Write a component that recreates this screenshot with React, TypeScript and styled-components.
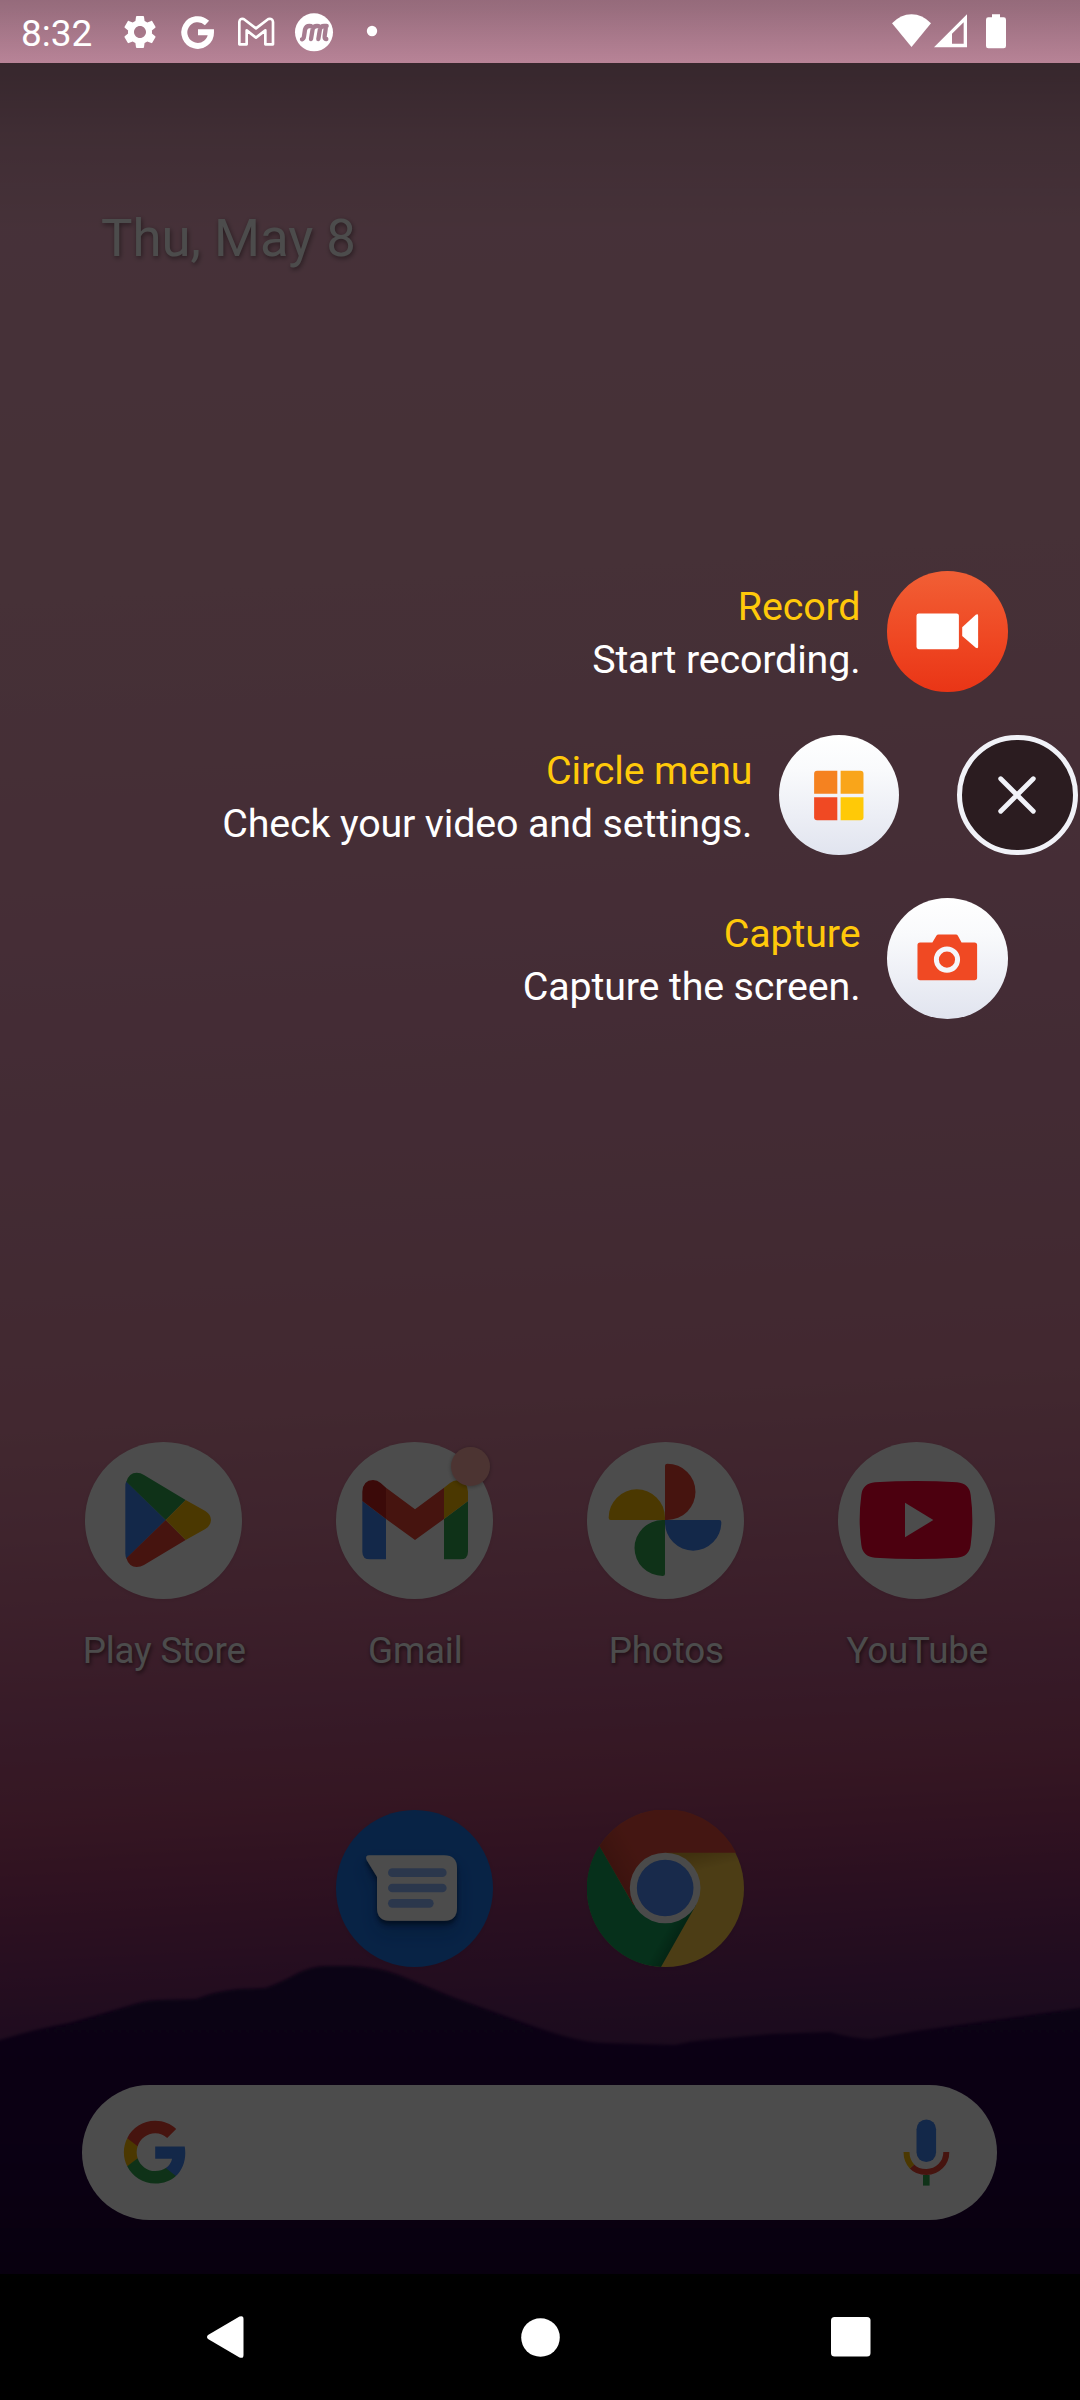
import React from "react";
import styled, { createGlobalStyle } from "styled-components";

const GlobalStyle = createGlobalStyle`
  *, *::before, *::after { box-sizing: border-box; }
  body { margin: 0; background: #000; font-family: Roboto, "Noto Sans", sans-serif; }
  svg { display: block; }
`;

const Screen = styled.div`
  position: relative;
  width: 1080px;
  height: 2400px;
  overflow: hidden;
  display: flex;
  flex-direction: column;
  background:
    linear-gradient(
      180deg,
      rgba(0, 0, 0, 0.37) 0px,
      rgba(0, 0, 0, 0.35) 10px,
      rgba(0, 0, 0, 0.22) 63px,
      rgba(0, 0, 0, 0.09) 135px,
      rgba(0, 0, 0, 0) 230px
    ),
    linear-gradient(
      176.5deg,
      rgb(236, 169, 195) 0px,
      rgb(234, 166, 190) 250px,
      rgb(233, 163, 183) 600px,
      rgb(230, 151, 181) 950px,
      rgb(221, 142, 170) 1250px,
      rgb(220, 134, 160) 1430px,
      rgb(211, 122, 152) 1530px,
      rgb(198, 103, 140) 1640px,
      rgb(183, 88, 132) 1730px,
      rgb(178, 76, 117) 1815px,
      rgb(158, 60, 110) 1890px,
      rgb(127, 47, 107) 1975px,
      rgb(100, 40, 103) 2050px,
      rgb(85, 35, 95) 2110px
    );
`;

const Hills = styled.svg`
  position: absolute;
  left: 0;
  top: 1950px;
`;

const StatusBar = styled.header`
  height: 63px;
  flex: none;
  display: flex;
  align-items: center;
  padding: 0 64px 0 21px;
  color: #fff;
`;

const Clock = styled.span`
  width: 99px;
  font-size: 37px;
  line-height: 44px;
  padding-top: 4px;
`;

const Notifications = styled.div`
  display: flex;
  gap: 18px;
  flex: 1;
`;

const SystemIcons = styled.div`
  display: flex;
`;

const BatterySlot = styled.div`
  margin-left: 5px;
`;

const Home = styled.main`
  position: relative;
  flex: 1;
  display: flex;
  flex-direction: column;
`;

const DateText = styled.div`
  height: 1379px;
  padding: 143px 0 0 101px;
  font-size: 52.7px;
  line-height: 64px;
  color: #fff;
  text-shadow: 1px 2px 5px rgba(0, 0, 0, 0.45);
`;

const AppGrid = styled.div<{ $height: number }>`
  display: grid;
  grid-template-columns: repeat(4, 251px);
  height: ${(p) => p.$height}px;
  padding: 0 38px;
`;

const AppTile = styled.div<{ $column?: number }>`
  display: flex;
  flex-direction: column;
  align-items: center;
  gap: 31px;
  ${(p) => (p.$column ? `grid-column: ${p.$column};` : "")}
`;

const AppIcon = styled.div<{ $color?: string }>`
  position: relative;
  width: 157px;
  height: 157px;
  border-radius: 50%;
  background: ${(p) => p.$color ?? "#fff"};
  box-shadow: 0 1px 4px rgba(0, 0, 0, 0.07);
`;

const AppLabel = styled.span`
  padding-left: 1.5px;
  font-size: 36.75px;
  letter-spacing: -0.14px;
  line-height: 42px;
  color: #fff;
  white-space: nowrap;
  text-shadow: 1px 2px 4px rgba(0, 0, 0, 0.6);
`;

const Badge = styled.i`
  position: absolute;
  left: 115px;
  top: 5px;
  width: 39px;
  height: 39px;
  border-radius: 50%;
  background: #ffb0a8;
  box-shadow: 0 1px 4px rgba(0, 0, 0, 0.3);
`;

const SearchBar = styled.div`
  width: 915px;
  height: 135px;
  margin-left: 82px;
  border-radius: 68px;
  background: #fff;
  display: flex;
  align-items: center;
  justify-content: space-between;
  padding: 0 47px 0 39px;
`;

const Scrim = styled.div`
  position: absolute;
  inset: 0;
  background: rgba(0, 0, 0, 0.7);
`;

const Menu = styled.section`
  position: absolute;
  top: 508px;
  right: 0;
  display: flex;
  flex-direction: column;
  align-items: flex-end;
  gap: 42.5px;
`;

const MenuRow = styled.div<{ $right: number }>`
  display: flex;
  align-items: center;
  height: 121px;
  padding-right: ${(p) => p.$right}px;
`;

const MenuText = styled.div`
  padding: 3px 26.5px 0 0;
  text-align: right;
  font-size: 39.4px;
  letter-spacing: -0.15px;
  line-height: 53px;
  color: #fff;
  white-space: nowrap;
`;

const MenuTitle = styled.div`
  color: #ffc90a;
`;

const RoundButton = styled.button<{ $fill: string }>`
  width: 120.6px;
  height: 120.6px;
  padding: 0;
  border: 0;
  border-radius: 50%;
  background: ${(p) => p.$fill};
`;

const CloseButton = styled(RoundButton)`
  margin-left: 57.5px;
  border: 5.3px solid #f1f2f8;
  display: grid;
  place-items: center;
`;

const NavBar = styled.nav`
  height: 126px;
  flex: none;
  background: #000;
  display: flex;
  align-items: center;
  justify-content: space-between;
  padding: 0 209.5px 0 206px;
`;

const WHITE_FILL = "linear-gradient(#fff 0%, #f9fafc 30%, #e1e4ef 100%)";
const RED_FILL = "linear-gradient(#f15f35 0%, #ef4823 55%, #e93516 100%)";

type IconProps = { x: number; y: number; children: React.ReactNode };

const StatusSvg = ({ x, y, children }: IconProps) => (
  <svg width="40" height="40" viewBox={`${x - 60} ${y - 60} 120 120`}>{children}</svg>
);

const IconSvg = ({ x, y, children }: IconProps) => (
  <svg width="157" height="157" viewBox={`${x} ${y} 471 471`}>{children}</svg>
);

const MenuSvg = ({ x, y, children }: IconProps) => (
  <svg width="120.6" height="120.6" viewBox={`${x} ${y} 364 364`}>{children}</svg>
);

const PlayIcon = () => (
  <IconSvg x={45} y={66}>
    <path fill="#4285f4" d="M169 184Q166 190 166 200V400Q166 410 169 416L287 300Z" />
    <path fill="#34a853" d="M169 185Q177 158 200 158Q212 158 222 165L347 240L287 300Z" />
    <path fill="#ea4335" d="M169 415Q177 441 200 441Q212 441 222 435L347 360L287 300Z" />
    <path fill="#fbbc04" d="M347 240L406 273Q423 284 423 300Q423 316 406 327L347 360L287 300Z" />
  </IconSvg>
);

const GmailIcon = () => (
  <IconSvg x={798} y={66}>
    <path fill="#4285f4" d="M877 243L948 297V418H900Q877 418 877 395Z" />
    <path fill="#34a853" d="M1194 243L1122 297V418H1171Q1194 418 1194 395Z" />
    <path fill="#c5221f" d="M877 243V215Q879 181 909 180Q922 180 932 189L948 203V297Z" />
    <path fill="#ea4335" d="M948 203L1035 268L1122 203V297L1035 360L948 297Z" />
    <path fill="#fbbc04" d="M1122 203L1140 189Q1150 181 1162 181Q1192 184 1194 215V243L1122 297Z" />
  </IconSvg>
);

const PhotosIcon = () => (
  <IconSvg x={81} y={66}>
    <path fill="#ea4335" d="M315 300V137Q315 131 322 131A84.5 84.5 0 0 1 322 300Z" />
    <path fill="#fbbc04" d="M315 300H152Q146 300 146 293A84.5 85 0 0 1 315 293Z" />
    <path fill="#34a853" d="M315 300V462Q315 468 308 468A84.5 84 0 0 1 308 300Z" />
    <path fill="#4285f4" d="M315 300H478Q484 300 484 307A84.5 85 0 0 1 315 307Z" />
  </IconSvg>
);

const YouTubeIcon = () => (
  <IconSvg x={834} y={66}>
    <path
      fill="#ff0033"
      d="M945 187Q1068 179 1191 187Q1228 190 1232 225Q1242 300 1232 375Q1228 410 1191 413Q1068 421 945 413Q908 410 904 375Q894 300 904 225Q908 190 945 187Z"
    />
    <path fill="#fff" d="M1035 248L1120 300L1035 352Z" />
  </IconSvg>
);

const MessagesIcon = () => (
  <IconSvg x={48} y={60}>
    <defs>
      <filter id="bubbleShadow" x="-30%" y="-30%" width="160%" height="180%">
        <feDropShadow dx="0" dy="12" stdDeviation="7" floodColor="#052a5c" floodOpacity="0.75" />
        <feDropShadow dx="0" dy="26" stdDeviation="24" floodColor="#052a5c" floodOpacity="0.25" />
      </filter>
    </defs>
    <path
      fill="#fff"
      filter="url(#bubbleShadow)"
      d="M148 196H372Q411 196 411 235V353Q411 392 372 392H210Q171 392 171 353V260L140 210Q134 196 148 196Z"
    />
    <g fill="#92b9ff">
      <rect x="204" y="235" width="176" height="26" rx="13" />
      <rect x="204" y="281" width="176" height="26" rx="13" />
      <rect x="204" y="327" width="137" height="26" rx="13" />
    </g>
  </IconSvg>
);

const ChromeIcon = () => (
  <IconSvg x={801} y={60}>
    <defs>
      <linearGradient id="chromeRed" gradientUnits="userSpaceOnUse" x1="880" y1="250" x2="960" y2="205">
        <stop offset="0" stopColor="#c64033" />
        <stop offset="1" stopColor="#e54c3c" />
      </linearGradient>
      <linearGradient id="chromeYellow" gradientUnits="userSpaceOnUse" x1="1130" y1="188" x2="1142" y2="240">
        <stop offset="0" stopColor="#d7a334" />
        <stop offset="1" stopColor="#fdcb48" />
      </linearGradient>
      <linearGradient id="chromeGreen" gradientUnits="userSpaceOnUse" x1="1075" y1="445" x2="1038" y2="424">
        <stop offset="0" stopColor="#0e7c45" />
        <stop offset="1" stopColor="#14a05a" />
      </linearGradient>
    </defs>
    <circle cx="1036.5" cy="295.5" r="235.5" fill="url(#chromeYellow)" />
    <path fill="url(#chromeRed)" d="M838 168A235.5 235.5 0 0 1 1248 188H1036V295L940 345Z" />
    <path fill="url(#chromeGreen)" d="M838 168A235.5 235.5 0 0 0 1023 531L1128 345L1036 295L940 345Z" />
    <circle cx="1035.5" cy="294" r="106" fill="#f8f8f8" />
    <circle cx="1035.5" cy="294" r="85" fill="#508cfa" />
  </IconSvg>
);

const GoogleLogo = () => (
  <svg width="68.4" height="68.4" viewBox="0 0 24 24">
    <path fill="#4285f4" d="M22.56 12.25c0-.78-.07-1.53-.2-2.25H12v4.26h5.92c-.26 1.37-1.04 2.53-2.21 3.31v2.77h3.57c2.08-1.92 3.28-4.74 3.28-8.09z" />
    <path fill="#34a853" d="M12 23c2.97 0 5.46-.98 7.28-2.66l-3.57-2.77c-.98.66-2.23 1.06-3.71 1.06-2.86 0-5.29-1.93-6.16-4.53H2.18v2.84C3.99 20.53 7.7 23 12 23z" />
    <path fill="#fbbc04" d="M5.84 14.09c-.22-.66-.35-1.36-.35-2.09s.13-1.43.35-2.09V7.07H2.18C1.43 8.55 1 10.22 1 12s.43 3.45 1.18 4.93l3.66-2.84z" />
    <path fill="#ea4335" d="M12 5.38c1.62 0 3.06.56 4.21 1.64l3.15-3.15C17.45 2.09 14.97 1 12 1 7.7 1 3.99 3.47 2.18 7.07l3.66 2.84c.87-2.6 3.3-4.53 6.16-4.53z" />
  </svg>
);

const MicIcon = () => (
  <svg width="47" height="67" viewBox="0 0 47 67">
    <rect x="13.5" y="0.5" width="19.6" height="42.5" rx="9.8" fill="#4285f4" />
    <path fill="none" stroke="#ea4335" strokeWidth="6" d="M9 47.5Q14 53 23.3 53A19.7 19.7 0 0 0 43.3 33" />
    <path fill="none" stroke="#fbbc04" strokeWidth="6" d="M3.5 33Q3.5 41.5 9 47.5" />
    <rect x="20" y="56" width="6.6" height="10.6" fill="#34a853" />
  </svg>
);

const Wallpaper = () => (
  <Hills width="1080" height="324" viewBox="0 1950 1080 324">
    <defs>
      <linearGradient id="hill" x1="0" y1="0" x2="0" y2="1">
        <stop offset="0" stopColor="#280746" />
        <stop offset="0.5" stopColor="#250541" />
        <stop offset="1" stopColor="#1b0632" />
      </linearGradient>
      <filter id="soft" x="-2%" y="-5%" width="104%" height="110%">
        <feGaussianBlur stdDeviation="1.4" />
      </filter>
    </defs>
    <path
      fill="url(#hill)"
      filter="url(#soft)"
      d="M-20 2048L0 2040Q35 2029 69 2023Q105 2013 138 2003Q150 2000 160 2000L196 1999Q216 1991 238 1989L265 1988Q280 1983 296 1974Q312 1966 325 1966H352Q380 1967 399 1975L455 1998L530 2025Q580 2043 605 2043L675 2045Q690 2041 705 2040L771 2034L830 2032Q855 2039 871 2039L916 2031L1080 2008L1100 2004V2300H-20Z"
    />
  </Hills>
);

export default function App() {
  return (
    <>
      <GlobalStyle />
      <Screen>
        <Wallpaper />
        <StatusBar>
          <Clock>8:32</Clock>
          <Notifications>
            <svg width="40" height="40" viewBox="0 0 24 24" fill="#fff">
              <path d="M19.14 12.94c.04-.3.06-.61.06-.94 0-.32-.02-.64-.07-.94l2.03-1.58c.18-.14.23-.41.12-.61l-1.92-3.32c-.12-.22-.37-.29-.59-.22l-2.39.96c-.5-.38-1.03-.7-1.62-.94l-.36-2.54c-.04-.24-.24-.41-.48-.41h-3.84c-.24 0-.43.17-.47.41l-.36 2.54c-.59.24-1.13.57-1.62.94l-2.39-.96c-.22-.08-.47 0-.59.22L2.74 8.87c-.12.21-.08.47.12.61l2.03 1.58c-.05.3-.09.63-.09.94s.02.64.07.94l-2.03 1.58c-.18.14-.23.41-.12.61l1.92 3.32c.12.22.37.29.59.22l2.39-.96c.5.38 1.03.7 1.62.94l.36 2.54c.05.24.24.41.48.41h3.84c.24 0 .44-.17.47-.41l.36-2.54c.59-.24 1.13-.56 1.62-.94l2.39.96c.22.08.47 0 .59-.22l1.92-3.32c.12-.22.07-.47-.12-.61l-2.01-1.58zM12 15.6c-1.98 0-3.6-1.62-3.6-3.6s1.62-3.6 3.6-3.6 3.6 1.62 3.6 3.6-1.62 3.6-3.6 3.6z" />
            </svg>
            <StatusSvg x={594} y={95}>
              <path fill="none" stroke="#fff" strokeWidth="18" d="M621 68A40 40 0 1 0 633 96H594" />
            </StatusSvg>
            <StatusSvg x={768} y={94}>
              <path
                fill="none"
                stroke="#fff"
                strokeWidth="8"
                strokeLinejoin="round"
                d="M718 131V64Q719 52 731 55L768 83L805 55Q818 52 819 64V131H796V89L768 111L740 89V131Z"
              />
            </StatusSvg>
            <StatusSvg x={942} y={95}>
              <circle cx="942" cy="96" r="57" fill="#fff" />
              <path
                fill="none"
                stroke="#a67c90"
                strokeWidth="13"
                strokeLinecap="round"
                strokeLinejoin="round"
                d="M906 117Q911 116 912 108L915 88Q918 77 928 77Q939 77 938 86L933 116M938 86Q941 77 951 77Q961 77 960 86L955 116M960 86Q963 77 972 77H980Q978 77 977 85L974 107Q973 117 979 116"
              />
            </StatusSvg>
            <StatusSvg x={1116} y={96}>
              <circle cx="1116" cy="93" r="15.5" fill="#fff" />
            </StatusSvg>
          </Notifications>
          <SystemIcons>
            <StatusSvg x={153} y={95}>
              <path fill="#fff" d="M96 69Q122 42 154.500 42Q187 42 213 69L154.500 140Z" />
            </StatusSvg>
            <StatusSvg x={273} y={95}>
              <path fill="#fff" fillRule="evenodd" d="M222 141L321 42V141ZM276 100V130H311V66Z" />
            </StatusSvg>
            <BatterySlot>
              <StatusSvg x={408} y={95}>
                <path fill="#fff" d="M396 42H420V51H431Q438 51 438 58V137Q438 144 431 144H385Q378 144 378 137V58Q378 51 385 51H396Z" />
              </StatusSvg>
            </BatterySlot>
          </SystemIcons>
        </StatusBar>

        <Home>
          <DateText>Thu, May 8</DateText>
          <AppGrid $height={368}>
            <AppTile>
              <AppIcon><PlayIcon /></AppIcon>
              <AppLabel>Play Store</AppLabel>
            </AppTile>
            <AppTile>
              <AppIcon><GmailIcon /><Badge /></AppIcon>
              <AppLabel>Gmail</AppLabel>
            </AppTile>
            <AppTile>
              <AppIcon><PhotosIcon /></AppIcon>
              <AppLabel>Photos</AppLabel>
            </AppTile>
            <AppTile>
              <AppIcon><YouTubeIcon /></AppIcon>
              <AppLabel>YouTube</AppLabel>
            </AppTile>
          </AppGrid>
          <AppGrid $height={275}>
            <AppTile $column={2}>
              <AppIcon $color="#1b75e8"><MessagesIcon /></AppIcon>
            </AppTile>
            <AppTile $column={3}>
              <AppIcon $color="transparent"><ChromeIcon /></AppIcon>
            </AppTile>
          </AppGrid>
          <SearchBar>
            <GoogleLogo />
            <MicIcon />
          </SearchBar>

          <Scrim />
          <Menu>
            <MenuRow $right={72.5}>
              <MenuText>
                <MenuTitle>Record</MenuTitle>
                <div>Start recording.</div>
              </MenuText>
              <RoundButton $fill={RED_FILL} aria-label="Record">
                <MenuSvg x={979} y={61}>
                  <rect x="1068" y="189" width="128" height="108" rx="7" fill="#fff" />
                  <path fill="#fff" d="M1206 231L1247 193Q1254 189 1254 196V290Q1254 297 1247 293L1206 257Z" />
                </MenuSvg>
              </RoundButton>
            </MenuRow>
            <MenuRow $right={2.5}>
              <MenuText>
                <MenuTitle>Circle menu</MenuTitle>
                <div>Check your video and settings.</div>
              </MenuText>
              <RoundButton $fill={WHITE_FILL} aria-label="Circle menu">
                <MenuSvg x={656} y={552}>
                  <path fill="#f58220" d="M832 729H762V669Q762 660 771 660H832Z" />
                  <path fill="#f9a51a" d="M842 729V660H902Q911 660 911 669V729Z" />
                  <path fill="#f04923" d="M832 740V809H771Q762 809 762 800V740Z" />
                  <path fill="#ffc907" d="M842 740H911V800Q911 809 902 809H842Z" />
                </MenuSvg>
              </RoundButton>
              <CloseButton $fill="#2b1c20" aria-label="Close">
                <svg width="38" height="38" viewBox="0 0 38 38">
                  <path stroke="#f1f2f8" strokeWidth="4.8" strokeLinecap="round" d="M2.700 2.700L35.300 35.300M35.300 2.700L2.700 35.300" />
                </svg>
              </CloseButton>
            </MenuRow>
            <MenuRow $right={72.5}>
              <MenuText>
                <MenuTitle>Capture</MenuTitle>
                <div>Capture the screen.</div>
              </MenuText>
              <RoundButton $fill={WHITE_FILL} aria-label="Capture">
                <MenuSvg x={979} y={1042}>
                  <path
                    fill="#f04923"
                    d="M1079 1176H1116L1128 1156Q1130 1152 1135 1152H1187Q1191 1152 1193 1156L1204 1176H1243Q1251 1176 1251 1184V1282Q1251 1290 1243 1290H1079Q1071 1290 1071 1282V1184Q1071 1176 1079 1176Z"
                  />
                  <circle cx="1160" cy="1228" r="32" fill="none" stroke="#f5f6fa" strokeWidth="15" />
                </MenuSvg>
              </RoundButton>
            </MenuRow>
          </Menu>
        </Home>

        <NavBar>
          <svg width="43" height="44" viewBox="0 0 43 44">
            <path fill="#fff" d="M2 20L33.500 1.600Q37.500 0 37.500 4V40Q37.500 44 33.500 42.400L2 24Q0 22 2 20Z" />
          </svg>
          <svg width="39" height="39" viewBox="0 0 39 39">
            <circle cx="19.500" cy="19.500" r="19.300" fill="#fff" />
          </svg>
          <svg width="39.500" height="39.500" viewBox="0 0 39.5 39.5">
            <rect width="39.500" height="39.500" rx="3.500" fill="#fff" />
          </svg>
        </NavBar>
      </Screen>
    </>
  );
}
